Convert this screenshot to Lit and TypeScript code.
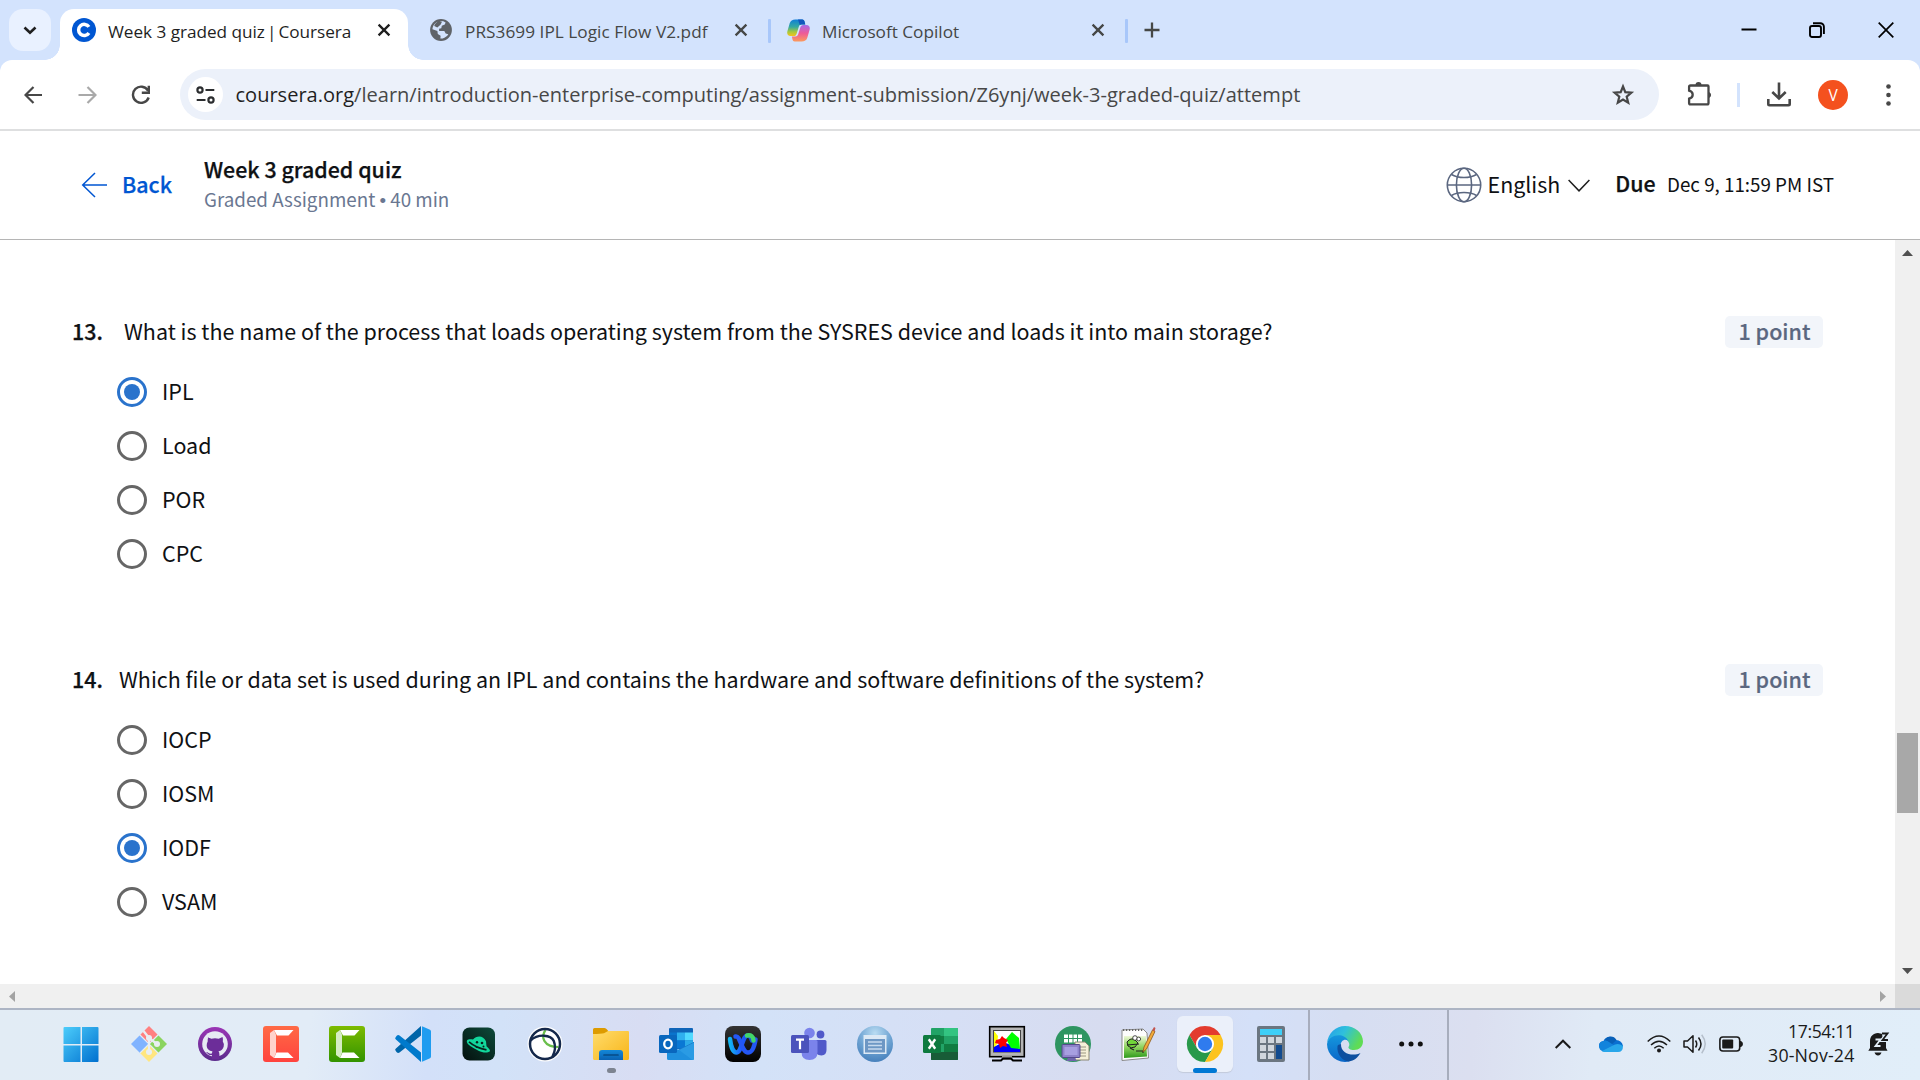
import { LitElement, html, css, svg } from "lit";
import { customElement, property } from "lit/decorators.js";
import { classMap } from "lit/directives/class-map.js";

const closeIcon = html`<svg class="x" width="14" height="14" viewBox="0 0 14 14"><path d="M1.6 1.6 12.4 12.4M12.4 1.6 1.6 12.4" fill="none" stroke="currentColor" stroke-width="2.3"/></svg>`;

/* ---------- Browser tab strip ---------- */
@customElement("tab-strip")
class TabStrip extends LitElement {
  static styles = css`
    :host { display: block; height: 60px; background: #d3e3fd; font: 17.2px/24px "Open Sans", "Noto Sans", sans-serif; color: #454746; }
    .strip { display: flex; height: 60px; align-items: center; }
    svg { display: block; flex: none; }
    .search { width: 42px; height: 42px; margin-left: 9px; border-radius: 14px; background: #e9f1ff; display: grid; place-items: center; flex: none; }
    .tab { display: flex; align-items: center; flex: none; box-sizing: border-box; }
    .label { white-space: nowrap; flex: 1; padding-top: 3px; }
    .bar { margin: 0 -2.3px; }
    .active { position: relative; width: 348px; height: 51px; margin: 9px 0 0 9px; padding: 0 17px 9px 12px; background: #fff; border-radius: 14px 14px 0 0; color: #1f1f1f; }
    .active .label { margin-left: 12px; letter-spacing: -.04px; }
    .active::before, .active::after { content: ""; position: absolute; bottom: 0; width: 15px; height: 15px; }
    .active::before { left: -15px; background: radial-gradient(circle at 0 0, transparent 14.5px, #fff 15px); }
    .active::after { right: -15px; background: radial-gradient(circle at 100% 0, transparent 14.5px, #fff 15px); }
    .second { width: 360px; padding: 0 20px 0 22px; }
    .second .label { margin-left: 13px; letter-spacing: .05px; }
    .third { width: 354px; padding: 0 20px 0 16px; }
    .third .label { margin-left: 12px; }
    .sep { width: 3px; height: 24px; border-radius: 1px; background: #a8c7fa; flex: none; margin-top: 1px; }
    .plus { margin-left: 16px; }
    .controls { display: flex; gap: 52.5px; margin-left: auto; padding-right: 26.5px; color: #000; }
  `;
  render() {
    return html`<div class="strip">
      <div class="search"><svg width="14" height="9" viewBox="0 0 14 9"><path d="M1.5 1.5 7 6.8 12.5 1.5" fill="none" stroke="#1f1f1f" stroke-width="2.6"/></svg></div>
      <div class="tab active">
        <svg width="24" height="24" viewBox="0 0 24 24"><circle cx="12" cy="12" r="12" fill="#0056d2"/><path d="M16.9 8.9A5.6 5.6 0 1 0 16.9 15" fill="none" stroke="#fff" stroke-width="3.5"/></svg>
        <span class="label">Week 3 graded quiz <span class="bar">|</span> Coursera</span>${closeIcon}
      </div>
      <div class="tab second">
        <svg width="22" height="22" viewBox="0 0 22 22"><circle cx="11" cy="11" r="10.9" fill="#5f6368"/><path d="M8.4 2.5c2.6-.9 5-.4 7.2.9l-.8 2.2-3 1.2-.5 2.4-2.2.6v2.1h5.2l1.4 2.6 2.6.7c-1.2 2-3.2 3.6-5.6 4.2l-2.3.1.2-2.8-2.8-1.7-.4-3-4.9-1.7c0-3.6 2.6-6.7 5.9-7.8z" fill="#d3e3fd"/><path d="M8 1.500c-1 2.500-3.600 3-3.700 5.500l3 1.400 3.200-2.700 1.500-3z" fill="#5f6368"/></svg>
        <span class="label">PRS3699 IPL Logic Flow V2.pdf</span>${closeIcon}
      </div>
      <div class="sep"></div>
      <div class="tab third">
        <svg width="23" height="23" viewBox="0 0 23 23">
          <defs>
            <linearGradient id="a" x1="0" y1="0" x2="0" y2="1"><stop offset="0" stop-color="#0e7fd8"/><stop offset=".45" stop-color="#35a9a0"/><stop offset=".75" stop-color="#a8c83c"/><stop offset="1" stop-color="#f5c21b"/></linearGradient>
            <linearGradient id="b" x1="0" y1="0" x2="0" y2="1"><stop offset="0" stop-color="#a86be8"/><stop offset=".5" stop-color="#ee5a97"/><stop offset="1" stop-color="#fb9a5c"/></linearGradient>
          </defs>
          <path d="M8.300 .5h7c1.300 0 1.900 1 2.200 2l.8 3h-4c-1.500 0-2.100 1-2.500 2.200l-2 6.500c-.6 2-1.400 2.800-3 2.800H3.500C.8 17-.3 15 .4 12.300l2.300-8C3.400 1.800 5.500.5 8.300.5z" fill="url(#a)"/>
          <path d="M14.700 22.500h-7c-1.300 0-1.900-1-2.200-2l-.6-3h3.500c1.700 0 2.400-1 2.800-2.200l2-6.500c.6-2 1.400-2.800 3-2.800h3.300c2.700 0 3.800 2 3.100 4.700l-2.300 8c-.7 2.500-2.800 3.800-5.600 3.800z" fill="url(#b)"/>
          <path d="M11 .5h4.300c1.300 0 1.900 1 2.200 2l.8 3h-4l-1.500.6z" fill="#1457bd"/>
        </svg>
        <span class="label">Microsoft Copilot</span>${closeIcon}
      </div>
      <div class="sep"></div>
      <svg class="plus" width="16" height="16" viewBox="0 0 16 16"><path d="M8 .5v15M.5 8h15" stroke="#454746" stroke-width="2.300"/></svg>
      <div class="controls">
        <svg width="16" height="16" viewBox="0 0 16 16"><path d="M.5 7.500h15" stroke="#000" stroke-width="2"/></svg>
        <svg width="16" height="16" viewBox="0 0 16 16" fill="none" stroke="#000" stroke-width="1.900"><rect x="1" y="4" width="11" height="11" rx="2"/><path d="M4 1.200h7.300a3.600 3.600 0 0 1 3.600 3.600V12"/></svg>
        <svg width="16" height="16" viewBox="0 0 16 16"><path d="M.7.7 15.300 15.300M15.300.7.7 15.300" stroke="#000" stroke-width="1.700"/></svg>
      </div>
    </div>`;
  }
}

/* ---------- Address bar ---------- */
@customElement("tool-bar")
class ToolBar extends LitElement {
  static styles = css`
    :host { display: block; background: #d3e3fd; font: 20.04px/28px "Open Sans", "Noto Sans", sans-serif; }
    .bar { display: flex; align-items: center; box-sizing: border-box; height: 71px; padding: 0 28px 0 24px; background: #fff; border-radius: 12px 12px 0 0; border-bottom: 2px solid #dedfe0; color: #474747; }
    svg { display: block; flex: none; }
    .fwd { margin-left: 34.5px; color: #a9a9a9; }
    .reload { margin-left: 34px; }
    .omni { display: flex; align-items: center; box-sizing: border-box; flex: none; width: 1479px; height: 51px; margin-left: 28.5px; padding: 0 24px 0 8px; background: #ecf1fa; border-radius: 26px; }
    .site { width: 35px; height: 35px; border-radius: 50%; background: #fff; display: grid; place-items: center; flex: none; }
    .url { flex: 1; margin-left: 12.5px; padding-top: 1px; white-space: nowrap; }
    .host { color: #1f1f1f; }
    .puzzle { margin-left: 28px; }
    .sep { width: 3px; height: 24px; margin: 0 27px 0 24px; background: #d3e3fd; }
    .avatar { width: 30px; height: 30px; flex: none; margin: 0 38px 0 27px; border-radius: 50%; background: #f4511e; color: #fff; font-size: 15.5px; line-height: 31px; text-align: center; }
  `;
  render() {
    return html`<div class="bar">
      <svg width="19" height="18" viewBox="0 0 19 18" fill="none" stroke="currentColor" stroke-width="2.200"><path d="M9.500 1 1.500 9l8 8M1.500 9H18"/></svg>
      <svg class="fwd" width="19" height="18" viewBox="0 0 19 18" fill="none" stroke="currentColor" stroke-width="2.200"><path d="M9.500 1l8 8-8 8M17.500 9H.5"/></svg>
      <svg class="reload" width="21" height="20" viewBox="0 0 21 20" fill="none" stroke="currentColor" stroke-width="2.400"><path d="M17 5.500A8.100 8.100 0 1 0 17.700 12.500M17.800.7v7h-7"/></svg>
      <div class="omni">
        <div class="site"><svg width="19" height="18" viewBox="0 0 19 18" fill="none" stroke="#2b2d2f" stroke-width="2.200"><circle cx="4" cy="4" r="2.600"/><path d="M9.500 4h8.800M.7 14h8.800"/><circle cx="15" cy="14" r="2.600"/></svg></div>
        <span class="url"><span class="host">coursera.org</span>/learn/introduction-enterprise-computing/assignment-submission/Z6ynj/week-3-graded-quiz/attempt</span>
        <svg width="24" height="23" viewBox="0 0 24 23"><path d="M12 3.500l2.300 5.700 6.100.5-4.700 4 1.500 6L12 16.500l-5.200 3.200 1.500-6-4.700-4 6.100-.5z" fill="none" stroke="currentColor" stroke-width="2.200"/></svg>
      </div>
      <svg class="puzzle" width="26" height="26" viewBox="0 0 26 26"><path d="M3.500 3.500h17a1 1 0 0 1 1 1V21a1.400 1.400 0 0 1-1.400 1.400H3.500A1.400 1.400 0 0 1 2.100 21v-4.300c4.800-1.200 4.800-6.700 0-8V4.900a1.400 1.400 0 0 1 1.400-1.400z" fill="none" stroke="currentColor" stroke-width="2.300"/><path d="M8.500 3a3 3 0 0 1 6 0zM22 10a3.200 3.200 0 0 1 0 6z" fill="currentColor"/></svg>
      <div class="sep"></div>
      <svg width="24" height="26" viewBox="0 0 24 26" fill="none" stroke="currentColor" stroke-width="2.600"><path d="M12 .5v15M5.300 10 12 16.500l6.700-6.500M1.300 17v5a1.200 1.200 0 0 0 1.200 1.200h19a1.200 1.200 0 0 0 1.200-1.200v-5"/></svg>
      <div class="avatar">V</div>
      <svg width="5" height="22" viewBox="0 0 5 22" fill="currentColor"><circle cx="2.500" cy="2.500" r="2.300"/><circle cx="2.500" cy="11" r="2.300"/><circle cx="2.500" cy="19.500" r="2.300"/></svg>
    </div>`;
  }
}

/* ---------- Quiz header ---------- */
@customElement("quiz-header")
class QuizHeader extends LitElement {
  static styles = css`
    :host { display: flex; align-items: center; box-sizing: border-box; height: 109px; padding: 0 86px 0 81px; border-bottom: 1px solid #b5b5b5; background: #fff; color: #0f1114; font: 21.4px/30px "Noto Sans CJK SC", sans-serif; white-space: nowrap; }
    svg { display: block; flex: none; }
    .semi { font-weight: 500; -webkit-text-stroke: .25px currentColor; }
    .back { color: #0056d2; margin-left: 15px; padding-bottom: 3px; width: 82px; }
    .titles { flex: 1; padding-bottom: 1px; }
    .sub { color: #6a7791; font-size: 18.79px; line-height: 29px; }
    .dot { font-family: "Liberation Sans", sans-serif; }
    .lang { margin-left: 6px; padding-bottom: 3px; }
    .chev { margin: 0 25px 0 8px; }
    .due { padding-bottom: 4px; }
    .date { font-size: 18.79px; margin-left: 11.5px; padding-bottom: 2px; }
  `;
  render() {
    return html`
      <svg width="26" height="26" viewBox="0 0 26 26" fill="none" stroke="#0056d2" stroke-width="1.500"><path d="M14 1 1.700 13 14 25M1.700 13H26"/></svg>
      <span class="semi back">Back</span>
      <div class="titles"><div class="semi">Week 3 graded quiz</div><div class="sub">Graded Assignment <span class="dot">•</span> 40 min</div></div>
      <svg width="36" height="36" viewBox="0 0 36 36" fill="none" stroke="#5b6780" stroke-width="1.600"><circle cx="18" cy="18" r="16.700"/><ellipse cx="18" cy="18" rx="7.600" ry="16.700"/><path d="M1.300 18h33.400M5.500 7.500c6.500 4 18.500 4 25 0M5.500 28.500c6.500-4 18.500-4 25 0"/></svg>
      <span class="lang">English</span>
      <svg class="chev" width="22" height="13" viewBox="0 0 22 13" fill="none" stroke="#1f1f1f" stroke-width="1.500"><path d="M.6 1 11 11.800 21.400 1"/></svg>
      <span class="semi due">Due</span><span class="date">Dec 9, 11:59 PM IST</span>`;
  }
}

/* ---------- Question with single-choice options ---------- */
@customElement("quiz-question")
class QuizQuestion extends LitElement {
  @property({ type: Number }) number = 0;
  @property() text = "";
  @property({ attribute: false }) options: string[] = [];
  @property({ type: Number }) chosen = -1;
  static styles = css`
    :host { display: block; height: 348px; color: #0f1114; font: 21.47px/32px "Noto Sans CJK SC", sans-serif; white-space: nowrap; }
    .head { display: flex; align-items: flex-start; padding: 0 72px 0 72px; height: 32px; }
    .num, .text { margin-top: -1px; }
    .num { font-weight: 500; -webkit-text-stroke: .25px currentColor; width: 47px; }
    .wide { width: 52px; }
    .text { flex: 1; }
    .badge { box-sizing: border-box; width: 98px; height: 32px; padding-left: 1px; border-radius: 5px; background: #f2f5fa; color: #5b6780; font-weight: 500; -webkit-text-stroke: .2px currentColor; text-align: center; line-height: 30px; }
    .list { display: grid; grid-auto-rows: 54px; padding: 17px 0 0 117px; }
    .option { display: flex; align-items: center; gap: 15px; }
    .option span { padding-bottom: 3px; }
    .radio { box-sizing: border-box; width: 30px; height: 30px; margin-bottom: 1px; border: 3px solid #666; border-radius: 50%; display: grid; place-items: center; }
    .on { border-color: #2a73cc; }
    .on::after { content: ""; width: 16px; height: 16px; border-radius: 50%; background: #2a73cc; }
  `;
  render() {
    return html`
      <div class="head"><span class=${classMap({ num: true, wide: this.number === 13 })}>${this.number}.</span><span class="text">${this.text}</span><span class="badge">1 point</span></div>
      <div class="list">${this.options.map((o, i) => html`<label class="option"><i class=${classMap({ radio: true, on: i === this.chosen })}></i><span>${o}</span></label>`)}</div>`;
  }
}

/* ---------- Taskbar icons, each drawn on a 36 x 36 grid ---------- */
const icons = [
  svg`<defs><linearGradient id="w" x1="0" y1="0" x2="1" y2="1"><stop offset="0" stop-color="#4ccdfb"/><stop offset="1" stop-color="#0070cf"/></linearGradient></defs><path d="M1.500 1h16v17h-17v-16a1 1 0 0 1 1-1zM19 1h15.500a1 1 0 0 1 1 1v16H19zM.5 19.500h17V36h-16a1 1 0 0 1-1-1zM19 19.500h16.500V35a1 1 0 0 1-1 1H19z" fill="url(#w)"/>`,
  svg`<path d="M18 0l9 9-9 9-9-9z" fill="#ff8080"/><path d="M27 9l9 9-9 9-9-9z" fill="#8bd45f"/><path d="M18 18l9 9-9 9-9-9z" fill="#ffe680"/><path d="M9 9l9 9-9 9-9-9z" fill="#80b3ff"/><path d="M7.500 7.500 17 17M28.500 7.500 9 27M19 19l9.500 9.500" stroke="#e3edf7" stroke-width="1.200"/><path d="M12.500 5l5.500 7v14M18 12l8 6" stroke="#e9eef3" stroke-width="2.300" fill="none"/><circle cx="18" cy="12" r="3" fill="#e9eef3"/><circle cx="26" cy="18" r="3" fill="#e9eef3"/><circle cx="18" cy="26" r="3" fill="#e9eef3"/>`,
  svg`<defs><linearGradient id="gh" x1="0" y1="0" x2="0" y2="1"><stop offset="0" stop-color="#9a35b5"/><stop offset="1" stop-color="#5b2c8c"/></linearGradient></defs><circle cx="18" cy="18" r="17" fill="url(#gh)"/><circle cx="18" cy="18" r="12.800" fill="#e6eaf3"/><path d="M10.500 11l3.800 1.700q3.700-.9 7.400 0L25.500 11q.9 2.400.3 4.500 1.500 2 .9 5-.9 4-5.200 4.700.9 1.200.9 3v5h-7.500v-4.200c-4 .8-4.200-2.500-6.200-3 2.400-.6 3.300 2.400 6.200 1.600l.5-2.400c-4.300-.7-5.700-3-5.700-6q0-2 1-3.700-.6-2 .8-4.500z" fill="#6c2d99"/>`,
  svg`<defs><linearGradient id="cr" x1="0" y1="0" x2="0" y2="1"><stop offset="0" stop-color="#ff6a45"/><stop offset="1" stop-color="#ff433e"/></linearGradient></defs><rect width="36" height="36" rx="3" fill="url(#cr)"/><path d="M11 4h19.500l-5 5.500H14z" fill="#fff"/><path d="M7 7l4-3 2 4.500V27l-2 5-4-3z" fill="#ffd3cc"/><path d="M13.500 26.500H25l5.500 5.500H11z" fill="#fff"/>`,
  svg`<defs><linearGradient id="cg" x1="0" y1="0" x2="0" y2="1"><stop offset="0" stop-color="#7dbb00"/><stop offset="1" stop-color="#329300"/></linearGradient></defs><rect width="36" height="36" rx="3" fill="url(#cg)"/><path d="M11 4h19.500l-5 5.500H14z" fill="#fff"/><path d="M7 7l4-3 2 4.500V27l-2 5-4-3z" fill="#d5ecc4"/><path d="M13.500 26.500H25l5.500 5.500H11z" fill="#fff"/>`,
  svg`<path d="M26 0v9.500L4.500 26.500Q3 27.500 1.500 26L.5 24.600Q-.4 23.500.9 22.500z" fill="#0065a9"/><path d="M26 36v-9.500L4.500 9.500Q3 8.500 1.500 10L.5 11.400Q-.4 12.500.9 13.500z" fill="#007acc"/><path d="M26.500 0 35 3.800Q36 4.300 36 5.500v25q0 1.200-1 1.700L26.500 36q1 0 .5-2V2q.5-2-.5-2z" fill="#1f9cf0"/>`,
  svg`<defs><linearGradient id="lz" x1="1" y1="0" x2="0" y2="1"><stop offset="0" stop-color="#0d4a3a"/><stop offset="1" stop-color="#04100d"/></linearGradient></defs><rect x="1.500" y="1.500" width="32.500" height="33" rx="7" fill="url(#lz)"/><path d="M6 14.500c1.500-1.700 4-1.200 6-1 3.500-4.300 10.500-4.300 13 1.700l.5 5c2.500 2 3.500 3.500 3.500 5-2.500 2-7.500 1.500-11.500-.5l-5.500-3C8 19.500 5 17 6 14.500z" fill="#12d89c"/><path d="M8 15.800c4 3.500 12 7 17.500 8" fill="none" stroke="#08251d" stroke-width="1.700"/><circle cx="16" cy="16.200" r="1.200" fill="#08251d"/><circle cx="21" cy="17" r="1.300" fill="#08251d"/><circle cx="15.500" cy="21" r=".9" fill="#08251d"/><circle cx="22.500" cy="20.500" r="1" fill="#08251d"/>`,
  svg`<circle cx="18" cy="18" r="17.500" fill="#fff"/><path d="M18.500 4c-5 7-2 17 13 17" fill="none" stroke="#6abf4b" stroke-width="2.200"/><circle cx="18" cy="18" r="15" fill="none" stroke="#14284b" stroke-width="2.500"/><path d="M3.500 14.500C11 7.500 24 8.500 26.800 15c2 5 1 11-1.300 15.500" fill="none" stroke="#14284b" stroke-width="2.400"/>`,
  svg`<defs><linearGradient id="fo" x1="0" y1="0" x2="1" y2="1"><stop offset="0" stop-color="#ffdc6b"/><stop offset="1" stop-color="#f8b519"/></linearGradient><linearGradient id="fb" x1="0" y1="0" x2="0" y2="1"><stop offset="0" stop-color="#1388d8"/><stop offset="1" stop-color="#0a62b3"/></linearGradient></defs><path d="M0 3.500Q0 2 1.500 2h10q1.500 0 2.500 1.500L16 6v4H0z" fill="#dd9b00"/><path d="M0 8q8 0 11-.7L15 5h20q1 0 1 1v26.500q0 1.500-1.500 1.500h-33Q0 34 0 32.500z" fill="url(#fo)"/><path d="M6 34v-7q0-3 3-3h18q3 0 3 3v7z" fill="url(#fb)"/><path d="M11 29h14" stroke="#074b86" stroke-width="1.700" stroke-linecap="round"/>`,
  svg`<path d="M11 2h22q1 0 1 1v20H10V3q0-1 1-1z" fill="#0f64b8"/><path d="M10 6.500h8v8h-8z" fill="#0a73cc"/><path d="M18 6.500h8v8h-8z" fill="#2fb0ef"/><path d="M26 6.500h8v8h-8z" fill="#50d9ff"/><path d="M18 14.500h8v8h-8z" fill="#0a78d4"/><path d="M26 14.500h8V22h-8z" fill="#2caae8"/><path d="M20 23.500 35 16v16.500q0 1.500-1.500 1.500H9.500Q8 34 8 32.500V22z" fill="#1f90de"/><path d="M20 23.500 35 16v15z" fill="#1670c2"/><path d="M20 24 35 16.500v16q0 1.500-1.500 1.500z" fill="#2a9be4"/><rect y="9" width="18" height="18" rx="1.500" fill="#0967be"/><ellipse cx="9" cy="18" rx="3.800" ry="4.300" fill="none" stroke="#fff" stroke-width="2.300"/>`,
  svg`<defs><linearGradient id="wx" x1="0" y1="0" x2="1" y2="0"><stop offset="0" stop-color="#12b5f2"/><stop offset=".5" stop-color="#1f5cff"/><stop offset="1" stop-color="#1a4fe0"/></linearGradient><linearGradient id="wk" x1="0" y1="0" x2="0" y2="1"><stop offset="0" stop-color="#333"/><stop offset="1" stop-color="#000"/></linearGradient></defs><rect width="36" height="36" rx="8" fill="url(#wk)"/><path d="M5 13c1 9 3.500 13.500 6.500 13.500 5 0 6-17 11-17 3 0 4 2.500 4.500 5" fill="none" stroke="url(#wx)" stroke-width="4.500" stroke-linecap="round"/><path d="M10.500 10.500c5-1.500 6 16 12.500 16 4 0 6.500-6.500 7.500-13" fill="none" stroke="#2457f5" stroke-width="4.500" stroke-linecap="round"/><path d="M22 9.500c4-.8 6.500 1 6.500 5" fill="none" stroke="#42d66a" stroke-width="4.500" stroke-linecap="round"/>`,
  svg`<circle cx="18.500" cy="7" r="5.300" fill="#7b83eb"/><circle cx="29.500" cy="8.500" r="3.900" fill="#5059c9"/><path d="M25 14h9q1.500 0 1.500 1.500V24q0 5-5 5.500-3 0-5.500-2z" fill="#5059c9"/><path d="M11 14h14q1.500 0 1.500 1.500V26q0 8-8 8t-8-8z" fill="#7b83eb"/><rect y="9" width="18" height="18" rx="1.500" fill="#4b53bc"/><path d="M5 13.700h8M9 13.700v9.500" stroke="#fff" stroke-width="2.200"/>`,
  svg`<defs><radialGradient id="rd" cx=".5" cy=".2" r=".9"><stop offset="0" stop-color="#b9dcf2"/><stop offset=".5" stop-color="#6fa4d3"/><stop offset="1" stop-color="#3b76b5"/></radialGradient></defs><circle cx="18" cy="18" r="18" fill="url(#rd)"/><rect x="6.500" y="9" width="23" height="19" fill="#dce9f5"/><rect x="8" y="13" width="20" height="13.500" fill="#6d97c4"/><path d="M11 16h14M11 19.500h14M11 23h14" stroke="#c7daee" stroke-width="1.500"/>`,
  svg`<path d="M9 2h25q1 0 1 1v31H8V3q0-1 1-1z" fill="#21a366"/><path d="M21 2h13q1 0 1 1v7H21z" fill="#33c481"/><path d="M8 10h13v8H8z" fill="#107c41"/><path d="M21 18h14v8H21z" fill="#107c41"/><path d="M8 26h27v7q0 1-1 1H9q-1 0-1-1z" fill="#185c37"/><rect y="9" width="18" height="18" rx="1.500" fill="#0e7a3f"/><path d="M5.800 13.300 12.200 22.700M12.200 13.300 5.800 22.700" stroke="#fff" stroke-width="2.400"/>`,
  svg`<rect x=".7" y=".7" width="34.600" height="30" fill="#b5b5b5" stroke="#000" stroke-width="1.600"/><rect x="4.500" y="4.500" width="27" height="21.500" fill="#fff" stroke="#444"/><path d="M5 5l4 5-1 8-3 4z" fill="#ff0"/><path d="M5 26v-5l9-5 8 3 9 4v3z" fill="#00f"/><path d="M17 13l6-7 7 6 1 11-9-1z" fill="#0f0"/><path d="M7 14l4-1 2-3 2 2 4 2-2 3 1 4-4-1-3 2-1-4-4-1z" fill="red"/><path d="M13 30h10v4H13z" fill="#999"/><path d="M3 34.500h9l2-2h8l2 2h9" stroke="#000" stroke-width="2" fill="none"/>`,
  svg`<circle cx="18" cy="18" r="18" fill="#2e9561"/><path d="M9 8.500h18v8H9z" fill="#fff"/><path d="M9 12.500h18M13.500 8v9M18 8v9M22.500 8v9" stroke="#2e9561"/><path d="M20 16h10l4 4v14H20z" fill="#f5f0d8" stroke="#8c8874"/><path d="M25 21h6M25 24h6M25 27h6M25 30h6" stroke="#9b9680"/><rect x="7" y="18.500" width="18" height="13" rx="1" fill="#8e83c9" stroke="#554b8d"/><path d="M9.500 21h13v8h-13z" fill="#a79fe0"/><path d="M13 32h7l2 3H11z" fill="#6f65ab"/>`,
  svg`<defs><linearGradient id="np" x1="0" y1="0" x2="0" y2="1"><stop offset="0" stop-color="#eef8d8"/><stop offset=".5" stop-color="#8fd45f"/><stop offset="1" stop-color="#2f9a1c"/></linearGradient></defs><path d="M1 4l21-1 4 4 1.500 25L1 34.500z" fill="#fdfdfd" stroke="#8a8a8a"/><path d="M3 10h22l1 20.500-23 1.500z" fill="url(#np)"/><path d="M2 4h21" stroke="#666" stroke-width="2" stroke-dasharray="1.200 1.800"/><path d="M6 16q4-5 8-2l3 3-3 4q-4 2-7-1z" fill="#72d63a" stroke="#222" stroke-width="1"/><circle cx="14" cy="12" r="2.300" fill="#fff" stroke="#222" stroke-width=".8"/><circle cx="17.700" cy="13" r="1.900" fill="#fff" stroke="#222" stroke-width=".8"/><path d="M6 19l12-1M9 22l4 2M15 25h7v2" stroke="#222" stroke-width="1.100" fill="none"/><path d="M22 26l1-5L31.500 4l2.500 1.500L25.500 23z" fill="#f2a93a" stroke="#8a5a1a" stroke-width=".8"/><path d="M31.300 4 33 1l1.500 1-1 3.500z" fill="#c2534d"/>`,
  svg`<path d="M18 9H33.600A18 18 0 0 0 2.400 9l7.800 13.500L9 18z" fill="#e33b2e"/><path d="M2.400 9A18 18 0 0 0 18 36l7.800-13.500H10.200z" fill="#28994a"/><path d="M18 9h15.600A18 18 0 0 1 18 36l7.800-13.500z" fill="#fcc31e"/><circle cx="18" cy="18" r="9" fill="#fff"/><circle cx="18" cy="18" r="7.200" fill="#2f7bee"/>`,
  svg`<rect x="4" width="28" height="36" rx="2" fill="#6b7681"/><rect x="7" y="3" width="22" height="6" fill="#3dcff8"/><path d="M7 11h6v6H7zM15 11h6v6h-6zM23 11h6v6h-6zM7 19h6v6H7zM15 19h6v6h-6zM7 27h6v6H7zM15 27h6v6h-6z" fill="#d0d6dd"/><rect x="23" y="19" width="6" height="14" fill="#124b8f"/>`,
];
const edge = svg`<defs><linearGradient id="e1" x1="0" y1="0" x2="1" y2=".4"><stop offset="0" stop-color="#249bea"/><stop offset=".5" stop-color="#2fc0dc"/><stop offset="1" stop-color="#5fdc55"/></linearGradient><linearGradient id="e2" x1="0" y1="0" x2="0" y2="1"><stop offset="0" stop-color="#1597dd"/><stop offset="1" stop-color="#0a66c8"/></linearGradient></defs><path d="M0 17C1 7 9 0 18 0c10 0 18 7 18 15.500 0 5-4 8.500-9 8.500-4 0-6-1.500-5.500-3 1.200-1.500 1-3.500 0-5C18 10 6 8 0 17z" fill="url(#e1)"/><path d="M0 18C2 8 17 6 21.500 15 18 12 14 14.500 13.500 19 13 25 17 31 24 32.500L22 35.500A18 18 0 0 1 0 18z" fill="url(#e2)"/><path d="M10.500 20C9.500 28 15 35 22 35.500c5-.8 9-4 11.500-8.500-7 3.500-20 1.500-19.500-9-2 .5-3 1-3.500 2z" fill="#0d4f9f"/>`;

/* ---------- Taskbar ---------- */
@customElement("task-bar")
class TaskBar extends LitElement {
  static styles = css`
    :host { display: flex; box-sizing: border-box; height: 72px; padding-left: 50px; border-top: 2px solid #adb5c4; background: linear-gradient(95deg, #e2ecf5 0, #e2ecf7 310px, #d3e0f9 430px, #d2e2f8 500px, #d8ddf3 640px, #d3e2f8 760px, #d6dff5 950px, #d7dcf0 1100px, #d4e0f8 1250px, #d6def2 1340px, #dbdff0 1470px, #e0eaf6 1590px, #e1eef9 1920px); color: #1a1a1a; font: 17.4px/24px "Open Sans", "Noto Sans", sans-serif; }
    svg { display: block; flex: none; overflow: visible; }
    .apps { display: grid; grid-template-columns: repeat(19, 66px); width: 1258px; }
    .cell { display: grid; place-items: center; box-sizing: border-box; width: 66px; height: 68px; }
    .start { padding-right: 4px; }
    .open { position: relative; }
    .open::after { content: ""; position: absolute; left: 28.5px; top: 58px; width: 9px; height: 5px; border-radius: 3px; background: #7d8491; }
    .current::after { left: 21px; width: 24px; background: #0078d4; }
    .current::before { content: ""; position: absolute; left: 5px; top: 6px; width: 56px; height: 56px; border-radius: 6px; background: #ebf0fa; box-shadow: 0 1px 1px #c2cadb; }
    .current svg { position: relative; }
    .pinned { display: flex; box-sizing: border-box; width: 141px; padding-left: 2px; border: solid #a7adbd; border-width: 0 2px; }
    .tray { display: flex; align-items: center; flex: 1; height: 68px; padding-left: 106px; }
    .cloud { margin-left: 28px; }
    .wifi { margin-left: 24px; }
    .snd { margin-left: 12px; }
    .bat { margin-left: 12px; }
    .clock { width: 111.5px; text-align: right; padding-bottom: 2px; white-space: nowrap; }
    .time { letter-spacing: -.4px; font-size: 17.6px; }
    .date { letter-spacing: .15px; font-size: 17.8px; }
    .bell { margin-left: 13.5px; }
  `;
  render() {
    return html`
      <div class="apps">${icons.map((ic, i) => html`<div class=${classMap({ cell: true, start: i === 0, open: i === 8 || i === 17, current: i === 17 })}><svg width="36" height="36" viewBox="0 0 36 36">${ic}</svg></div>`)}</div>
      <div class="pinned">
        <div class="cell"><svg width="36" height="36" viewBox="0 0 36 36">${edge}</svg></div>
        <div class="cell"><svg width="24" height="6" viewBox="0 0 24 6" fill="#111"><circle cx="2.700" cy="3" r="2.500"/><circle cx="12" cy="3" r="2.500"/><circle cx="21.300" cy="3" r="2.500"/></svg></div>
      </div>
      <div class="tray">
        <svg width="16" height="10" viewBox="0 0 16 10"><path d="M.7 9 8 1.700 15.300 9" fill="none" stroke="#1a1a1a" stroke-width="2"/></svg>
        <svg class="cloud" width="24" height="16" viewBox="0 0 24 16"><path d="M4.500 5C6 .5 13-1.500 17 4q6 .5 7 6l-6 4H5q-5-.5-5-4.500T4.500 5z" fill="#0a6fd0"/><path d="M6 3.500C9-.5 15-.5 17.500 4L12 9z" fill="#0860b8"/><path d="M4.500 5q3-1 5.500 1l6 4-12 5.500Q0 14 0 10t4.500-5z" fill="#1283dc"/><path d="M3 15l13-6.500q4-1.500 8 1.500 0 6-5 6H5q-1 0-2-1z" fill="#29a7ea"/></svg>
        <svg class="wifi" width="24" height="18" viewBox="0 0 24 18" fill="none" stroke="#1a1a1a" stroke-width="1.500"><path d="M.7 6.500q11.300-11 22.600 0M4 10q8-7.500 16 0M7.300 13.200q4.700-4.500 9.400 0"/><circle cx="12" cy="15.500" r="2" fill="#1a1a1a" stroke="none"/></svg>
        <svg class="snd" width="24" height="20" viewBox="0 0 24 20" fill="none" stroke="#1a1a1a" stroke-width="1.500"><path d="M1 7h3.500L10 1.800v16.400L4.500 13H1z" stroke-linejoin="round"/><path d="M12.500 6.500q2.500 3.500 0 7M15.500 3.500q5 6.500 0 13"/><path d="M18.700 .8q7 9.200 0 18.400" stroke="#b5bfcb"/></svg>
        <svg class="bat" width="24" height="16" viewBox="0 0 24 16"><rect x=".9" y="1" width="19.800" height="14" rx="3" fill="none" stroke="#1a1a1a" stroke-width="1.600"/><rect x="3.200" y="3.500" width="11" height="9" rx="1" fill="#1a1a1a"/><path d="M21 5h1q2 1 2 3t-2 3h-1z" fill="#1a1a1a"/></svg>
        <div class="clock"><div class="time">17:54:11</div><div class="date">30-Nov-24</div></div>
        <svg class="bell" width="22" height="24" viewBox="0 0 22 24"><path d="M2 16V9.500C2 4 5 1.500 10 1l4.500 1v5H18v9l1.500 2.800H.3z" fill="#1a1a1a"/><path d="M6.500 20.500h7q-1 3-3.500 3t-3.500-3z" fill="#1a1a1a"/><path d="M7.500 7.500h5l-5 6.500h5" fill="none" stroke="#e6f0f9" stroke-width="1.800"/><path d="M14 1.500h5.500L14.500 8h5.500" fill="none" stroke="#e1eef9" stroke-width="4"/><path d="M14 1.500h5.500L14.500 8h5.500" fill="none" stroke="#1a1a1a" stroke-width="1.800"/></svg>
      </div>`;
  }
}

@customElement("app-root")
class AppRoot extends LitElement {
  static styles = css`
    :host { display: flex; flex-direction: column; width: 1920px; height: 1080px; overflow: hidden; background: #fff; }
    .view { display: grid; grid-template: 744px 24px / 1895px 25px; }
    .page { padding-top: 76px; overflow: hidden; background: #fff; }
    .v, .h { display: flex; justify-content: space-between; background: #f0f0f0; }
    .v { flex-direction: column; align-items: center; padding: 10px 0; box-sizing: border-box; }
    .h { align-items: center; padding: 0 9px; }
    .thumb { width: 21px; height: 80px; background: #a8a8a8; margin: 477px 0 auto; }
    .corner { background: #dadada; }
    svg { display: block; }
  `;
  render() {
    return html`
      <tab-strip></tab-strip>
      <tool-bar></tool-bar>
      <quiz-header></quiz-header>
      <div class="view">
        <div class="page">
          <quiz-question .number=${13} text="What is the name of the process that loads operating system from the SYSRES device and loads it into main storage?" .options=${["IPL", "Load", "POR", "CPC"]} .chosen=${0}></quiz-question>
          <quiz-question .number=${14} text="Which file or data set is used during an IPL and contains the hardware and software definitions of the system?" .options=${["IOCP", "IOSM", "IODF", "VSAM"]} .chosen=${2}></quiz-question>
        </div>
        <div class="v">
          <svg width="11" height="6" viewBox="0 0 11 6"><path d="M0 6 5.500 0 11 6z" fill="#505050"/></svg>
          <div class="thumb"></div>
          <svg width="11" height="6" viewBox="0 0 11 6"><path d="M0 0h11L5.500 6z" fill="#505050"/></svg>
        </div>
        <div class="h">
          <svg width="6" height="11" viewBox="0 0 6 11"><path d="M6 0v11L0 5.500z" fill="#a3a3a3"/></svg>
          <svg width="6" height="11" viewBox="0 0 6 11"><path d="M0 0v11l6-5.500z" fill="#a3a3a3"/></svg>
        </div>
        <div class="corner"></div>
      </div>
      <task-bar></task-bar>`;
  }
}
